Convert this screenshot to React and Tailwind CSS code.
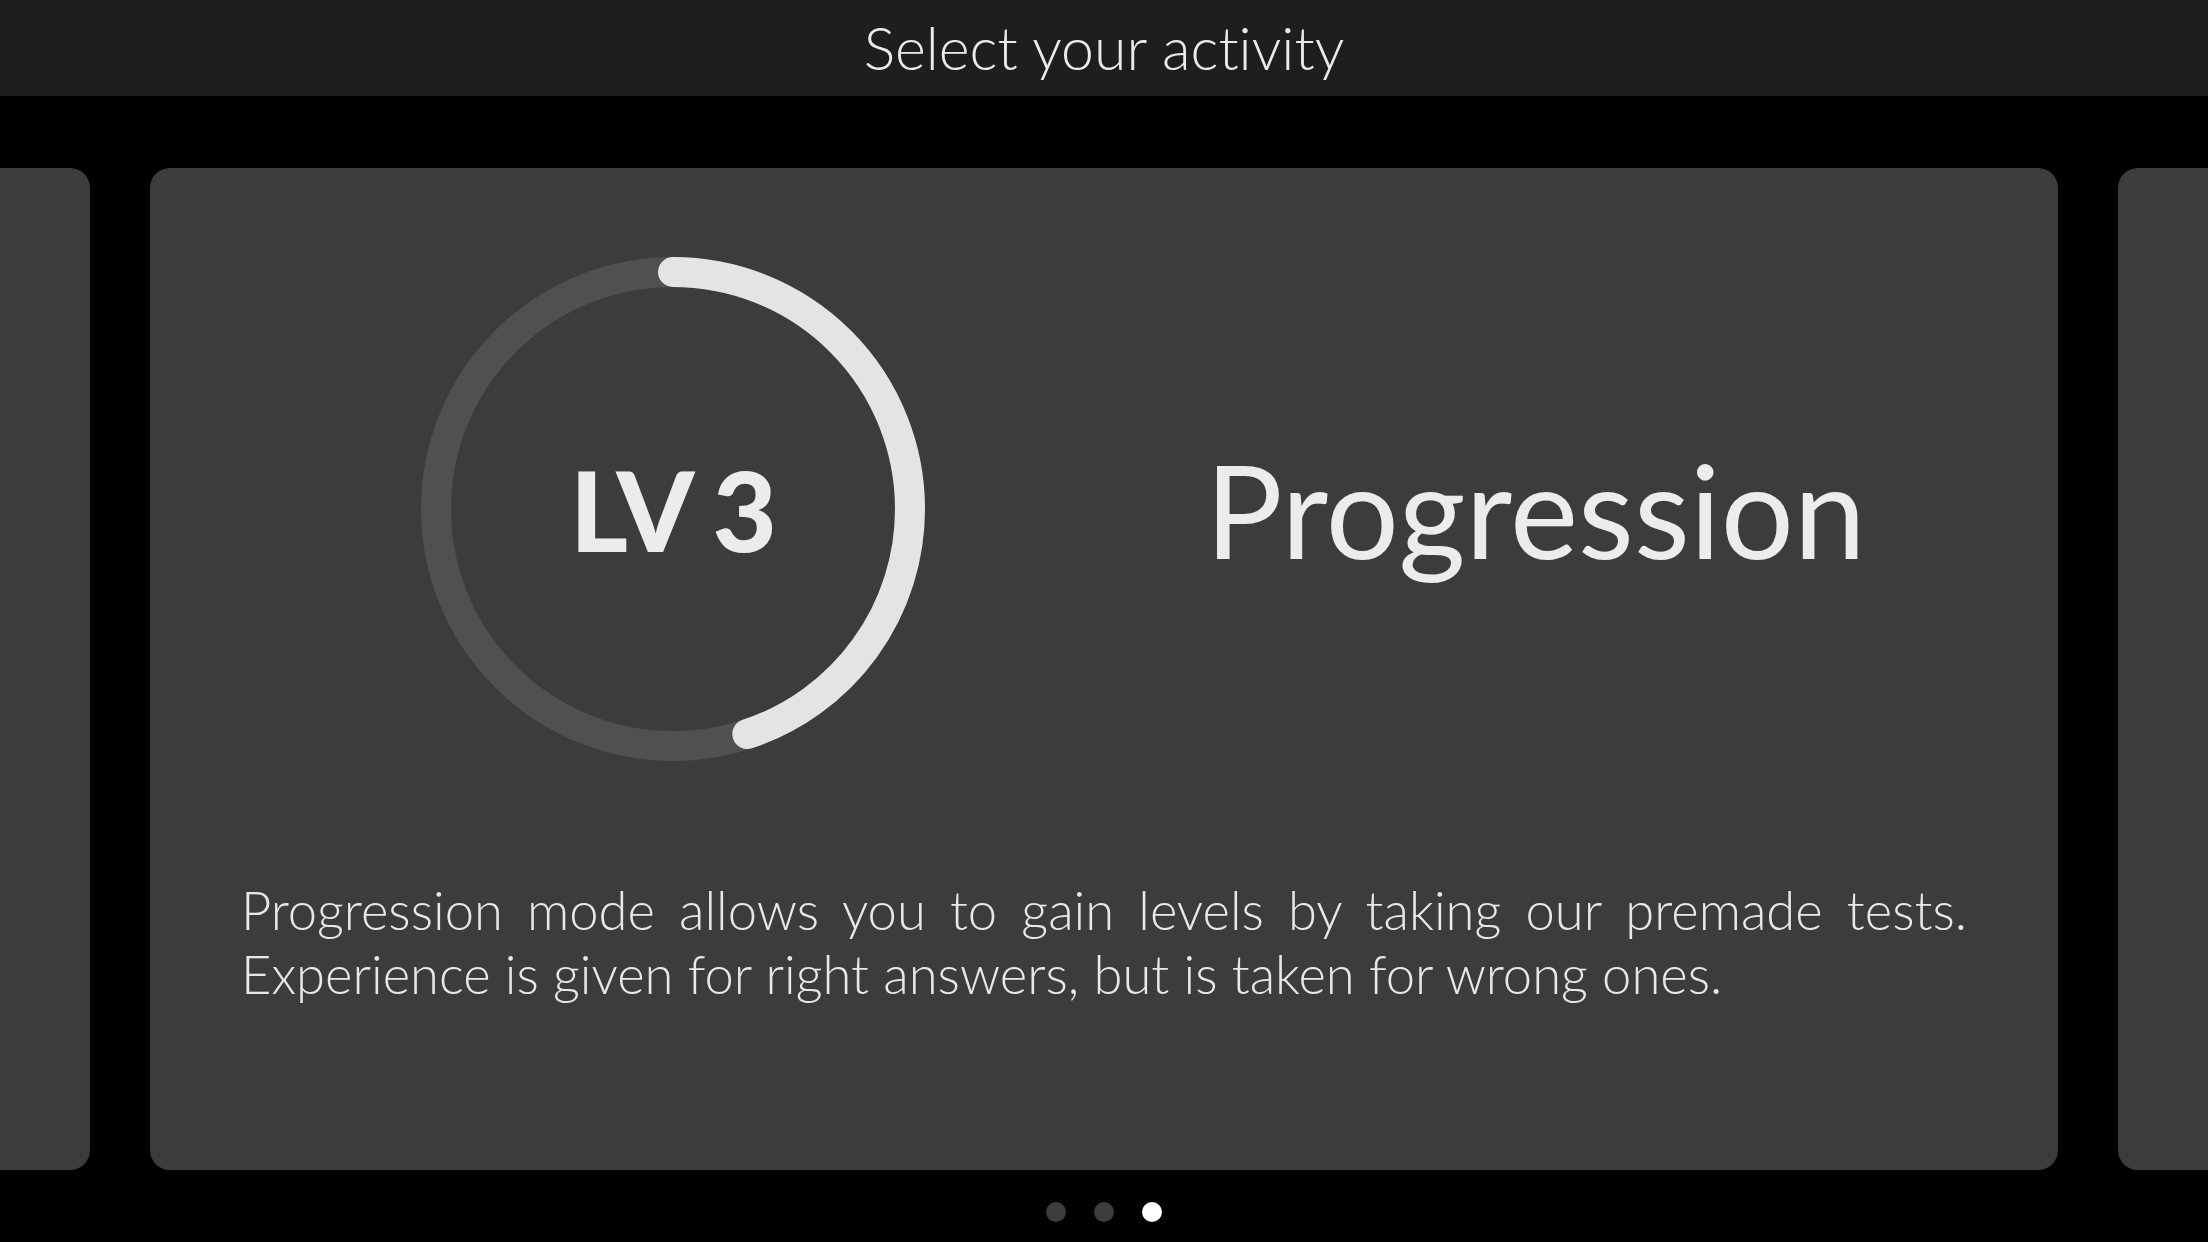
export default function App() {
  const progress = 0.449;
  const r = 237;
  const circ = 2 * Math.PI * r;
  return (
    <div className="min-h-screen w-full bg-black overflow-hidden font-['Lato','Liberation_Sans',sans-serif] [font-variant-ligatures:none]">
      <header className="h-[96px] bg-[#1e1e1e] flex items-center justify-center">
        <h1 className="text-[59px] leading-[96px] font-light text-[#ebebeb]">Select your activity</h1>
      </header>

      <div className="mt-[72px] flex justify-center gap-[60px] overflow-hidden">
        <div className="w-[1908px] h-[1002px] shrink-0 rounded-[20px] bg-[#3c3c3c]" />

        <div className="w-[1908px] h-[1002px] shrink-0 rounded-[20px] bg-[#3c3c3c] px-[91px] pt-[89px]">
          <div className="grid grid-cols-2">
            <div className="flex justify-center">
              <div className="relative w-[504px] h-[504px]">
                <svg width="504" height="504" viewBox="0 0 504 504">
                  <circle cx="252" cy="252" r={r} fill="none" stroke="#505050" strokeWidth="30" />
                  <circle
                    cx="252"
                    cy="252"
                    r={r}
                    fill="none"
                    stroke="#e4e4e4"
                    strokeWidth="30"
                    strokeLinecap="round"
                    strokeDasharray={circ}
                    strokeDashoffset={circ * (1 - progress)}
                    transform="rotate(-90 252 252)"
                  />
                </svg>
                <div className="absolute inset-0 flex items-center justify-center">
                  <span className="text-[111px] leading-none font-black tracking-[-2px] text-[#ececec]">LV 3</span>
                </div>
              </div>
            </div>
            <div className="flex items-center justify-center">
              <span className="text-[129px] leading-none font-normal text-[#ececec]">Progression</span>
            </div>
          </div>

          <p className="mt-[117px] text-[52.5px] leading-[64px] font-light text-justify text-[#e8e8e8]">
            Progression mode allows you to gain levels by taking our premade tests. Experience is given for right answers, but is taken for wrong ones.
          </p>
        </div>

        <div className="w-[1908px] h-[1002px] shrink-0 rounded-[20px] bg-[#3c3c3c]" />
      </div>

      <div className="mt-[32px] flex justify-center gap-[28px]">
        <span className="w-[20px] h-[20px] rounded-full bg-[#3c3c3c]" />
        <span className="w-[20px] h-[20px] rounded-full bg-[#3c3c3c]" />
        <span className="w-[20px] h-[20px] rounded-full bg-white" />
      </div>
    </div>
  );
}
